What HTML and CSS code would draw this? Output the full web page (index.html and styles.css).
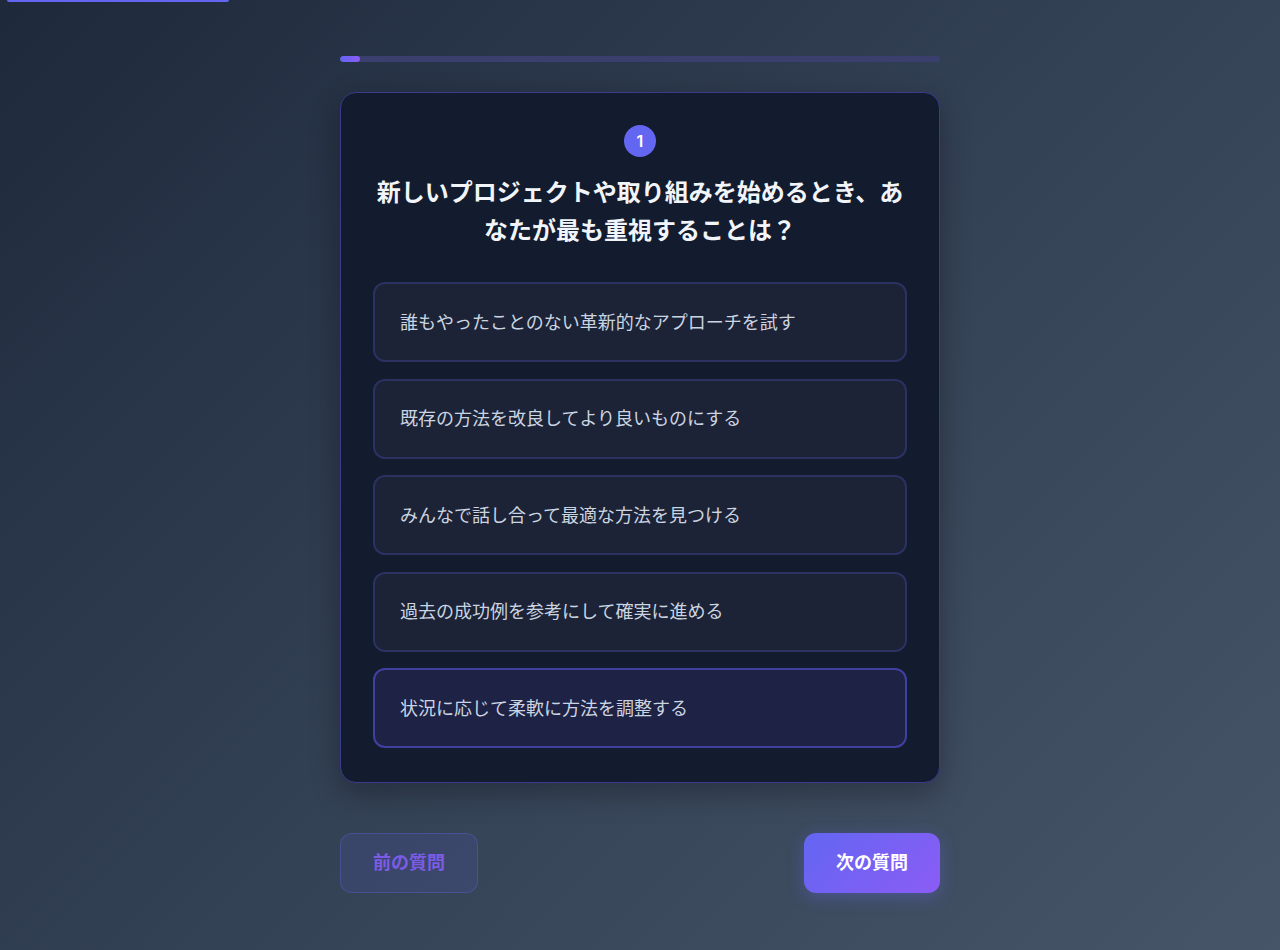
FILE: index.html
```html
<!DOCTYPE html>
<html lang="ja">
<head>
<meta charset="utf-8">
<title>診断</title>
<link rel="stylesheet" href="styles.css">
</head>
<body>
<div class="top-bar"></div>
<main class="quiz">
  <div class="progress"><div class="progress-fill" style="width: 20px"></div></div>
  <section class="card">
    <div class="badge">1</div>
    <h1 class="question">新しいプロジェクトや取り組みを始めるとき、あなたが最も重視することは？</h1>
    <div class="options">
      <div class="option">誰もやったことのない革新的なアプローチを試す</div>
      <div class="option">既存の方法を改良してより良いものにする</div>
      <div class="option">みんなで話し合って最適な方法を見つける</div>
      <div class="option">過去の成功例を参考にして確実に進める</div>
      <div class="option option-hover">状況に応じて柔軟に方法を調整する</div>
    </div>
  </section>
  <nav class="nav">
    <button class="btn btn-prev">前の質問</button>
    <button class="btn btn-next">次の質問</button>
  </nav>
</main>
</body>
</html>
```
FILE: styles.css
```css
* { box-sizing: border-box; }
html, body { margin: 0; height: 100%; }
body {
  font-family: "Noto Sans CJK JP", "Noto Sans", sans-serif;
  background: linear-gradient(135deg, #1e293b 0%, #334155 50%, #475569 100%);
  min-height: 950px;
  color: #e2e8f0;
  position: relative;
}
.top-bar {
  position: absolute;
  left: 7px;
  top: 0;
  width: 222px;
  height: 2px;
  background: #6366f1;
  border-radius: 0 0 2px 2px;
}
.quiz {
  width: 600px;
  margin: 0 auto;
  padding-top: 56px;
}
.progress {
  height: 6px;
  border-radius: 3px;
  background: #3b3f6e;
  overflow: hidden;
}
.progress-fill {
  height: 100%;
  border-radius: 3px;
  background: linear-gradient(90deg, #6366f1, #8b5cf6);
}
.card {
  margin-top: 30px;
  background: #131b2e;
  border: 1px solid #3b3a8c;
  border-radius: 16px;
  padding: 32px 32px 34px;
  box-shadow: 0 10px 30px rgba(0, 0, 0, 0.3);
  display: flex;
  flex-direction: column;
  align-items: center;
}
.badge {
  width: 32px;
  height: 32px;
  border-radius: 50%;
  background: #6366f1;
  color: #fff;
  font-family: Inter, "Noto Sans", sans-serif;
  font-weight: 600;
  font-size: 16px;
  display: flex;
  align-items: center;
  justify-content: center;
}
.question {
  margin: 15px 0 34px;
  font-size: 24px;
  line-height: 38px;
  font-weight: 700;
  color: #f1f5f9;
  text-align: center;
}
.options {
  width: 100%;
  display: flex;
  flex-direction: column;
  gap: 16.5px;
}
.option {
  height: 80px;
  border: 2px solid #2b3160;
  border-radius: 12px;
  background: #1c2336;
  padding: 0 25px 3px;
  display: flex;
  align-items: center;
  font-size: 18px;
  color: #cbd5e1;
}
.option-hover {
  border-color: #4040a0;
  background: #1e2245;
}
.nav {
  margin-top: 50px;
  display: flex;
  justify-content: space-between;
}
.btn {
  height: 60px;
  padding: 0 32px 4px;
  border-radius: 12px;
  font-family: "Noto Sans CJK JP", sans-serif;
  font-size: 18px;
  font-weight: 700;
}
.btn-prev {
  width: 138px;
  background: rgba(99, 102, 241, 0.12);
  border: 1px solid rgba(99, 102, 241, 0.3);
  color: #7c5ce6;
}
.btn-next {
  width: 136px;
  border: none;
  background: linear-gradient(135deg, #6366f1, #8b5cf6);
  color: #fff;
  box-shadow: 0 4px 16px rgba(99, 102, 241, 0.35);
}
```
